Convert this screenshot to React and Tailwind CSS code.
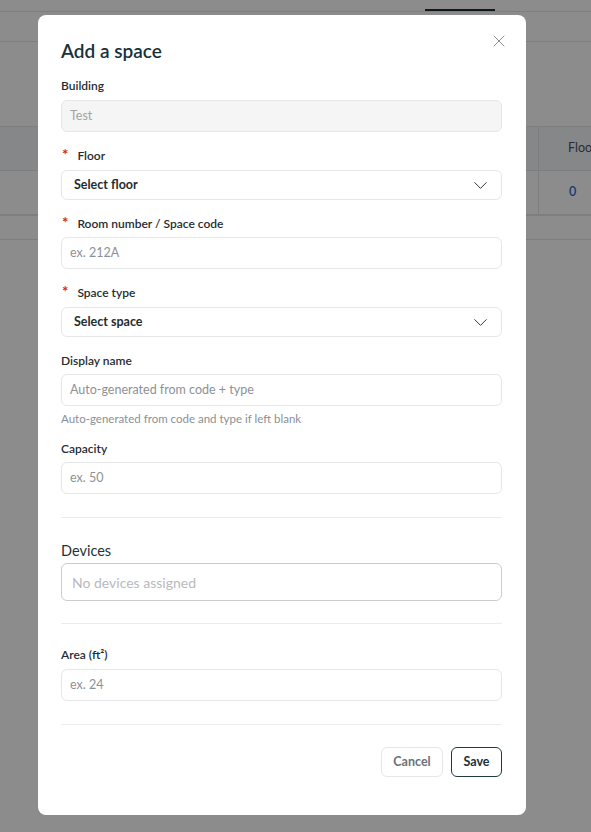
import React from 'react';
import { ChevronDown, X } from 'lucide-react';

const font = { fontFamily: 'Lato, Inter, "Noto Sans", "Liberation Sans", sans-serif' };

const Label = ({ children, required }) => (
  <div className="flex items-center h-4 text-[12px] leading-4 font-semibold text-[#1f2d31]">
    {required && <span className="text-[#d7262e] text-[15px] font-bold leading-4 ml-px mr-[9px] -mt-1">*</span>}
    <span>{children}</span>
  </div>
);

const TextInput = ({ placeholder, disabled }) => (
  <div
    className={`h-8 rounded-md border border-[#e6e7e9] flex items-center px-2 text-[12.5px] ${
      disabled ? 'mt-1.5 bg-[#f5f5f5] text-[#a3a3a3]' : 'mt-[5px] bg-white text-[#8d9196]'
    }`}
  >
    {placeholder}
  </div>
);

const Select = ({ value }) => (
  <div className="mt-1.5 h-[30px] rounded-md border border-[#e6e7e9] bg-white flex items-center justify-between pl-3 pr-[9px]">
    <span className="text-[12.5px] font-bold text-[#1f2d31]">{value}</span>
    <ChevronDown size={23} strokeWidth={1} className="text-[#2a2f33]" />
  </div>
);

const Divider = () => <div className="h-px bg-[#ececec]" />;

export default function App() {
  return (
    <div className="relative w-[591px] h-[832px] overflow-hidden bg-white" style={font}>
      {/* page behind the modal */}
      <div className="flex flex-col">
        <div className="h-[12px] flex justify-end pr-[96px] border-b border-[#e3e5e7]">
          <div className="w-[70px] h-[2px] self-end bg-[#1a2f36]" />
        </div>
        <div className="h-[30px] border-b border-[#e3e5e7]" />
        <div className="h-[84px]" />
        <div className="h-[45px] flex bg-[#f4f6f8] border-y border-[#e3e5e7]">
          <div className="flex-1" />
          <div className="w-[53px] border-l border-[#e3e5e7] flex items-center pl-[29px] text-[12.5px] text-[#4b5560] whitespace-nowrap">
            Floor
          </div>
        </div>
        <div className="h-[45px] flex border-b-2 border-[#e3e5e7]">
          <div className="flex-1" />
          <div className="w-[53px] border-l border-[#e3e5e7] flex items-center pl-[30px] text-[12.5px] font-semibold text-[#1f6fd1]">
            0
          </div>
        </div>
        <div className="h-[24px] border-b border-[#e3e5e7]" />
      </div>

      {/* overlay */}
      <div className="absolute inset-0 bg-black/[0.45]" />

      {/* modal */}
      <div className="absolute left-[38px] top-[15px] w-[488px] h-[800px] bg-white rounded-lg pl-[23px] pr-6 pt-6">
        <button className="absolute right-[17px] top-4 text-[#8a8d90]">
          <X size={20} strokeWidth={1.2} />
        </button>

        <h2 className="text-[19px] leading-6 font-semibold text-[#173238]">Add a space</h2>

        <div className="mt-[15px]">
          <Label>Building</Label>
          <TextInput placeholder="Test" disabled />
        </div>

        <div className="mt-4">
          <Label required>Floor</Label>
          <Select value="Select floor" />
        </div>

        <div className="mt-4">
          <Label required>Room number / Space code</Label>
          <TextInput placeholder="ex. 212A" />
        </div>

        <div className="mt-4">
          <Label required>Space type</Label>
          <Select value="Select space" />
        </div>

        <div className="mt-4">
          <Label>Display name</Label>
          <TextInput placeholder="Auto-generated from code + type" />
          <p className="mt-[5px] text-[11.5px] leading-4 text-[#8a9096]">Auto-generated from code and type if left blank</p>
        </div>

        <div className="mt-[14px]">
          <Label>Capacity</Label>
          <TextInput placeholder="ex. 50" />
        </div>

        <div className="mt-[23px]">
          <Divider />
        </div>

        <div className="mt-[23px]">
          <div className="text-[14.5px] leading-5 text-[#1f3338]">Devices</div>
          <div className="mt-[2px] h-[38px] rounded-md border border-[#c9cdd0] flex items-center px-[10px] text-[14px] text-[#b8babc]">
            No devices assigned
          </div>
        </div>

        <div className="mt-[22px]">
          <Divider />
        </div>

        <div className="mt-[23px]">
          <Label>Area (ft²)</Label>
          <div className="pt-px">
            <TextInput placeholder="ex. 24" />
          </div>
        </div>

        <div className="mt-[23px]">
          <Divider />
        </div>

        <div className="mt-[22px] flex justify-end gap-2">
          <button className="w-[62px] h-[30px] rounded-md border border-[#e6e7e9] text-[12.5px] font-bold text-[#6b7177]">
            Cancel
          </button>
          <button className="w-[51px] h-[30px] rounded-md border-[1.5px] border-[#1d3a40] text-[12.5px] font-bold text-[#1d2f33]">
            Save
          </button>
        </div>
      </div>
    </div>
  );
}
